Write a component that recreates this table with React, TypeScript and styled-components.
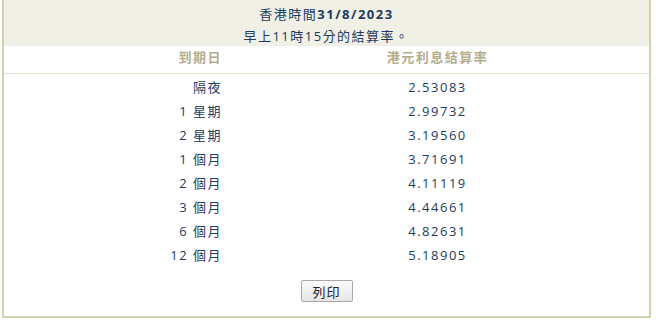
import React from "react";
import styled, { createGlobalStyle } from "styled-components";

const Global = createGlobalStyle`
  html, body { margin: 0; padding: 0; background: #fff; }
  body { font-family: "Open Sans", "Noto Sans CJK TC", sans-serif; }
`;

const Panel = styled.div`
  width: 649px;
  margin: 0 0 0 2px;
  border: 2px solid #d3d2b0;
  border-top: none;
  height: 318px;
  box-sizing: border-box;
  display: flex;
  flex-direction: column;
  color: #1d3b5c;
  font-size: 13px;
  letter-spacing: 1.5px;
`;

const Header = styled.div`
  background: #f1f0e6;
  height: 46px;
  display: flex;
  flex-direction: column;
  align-items: center;
  justify-content: center;
  box-sizing: border-box;
  padding-top: 4px;
  gap: 3px;
`;

const HeaderLine = styled.div`
  height: 19px;
  line-height: 19px;
`;

const Strong = styled.b`
  font-weight: 700;
`;

const Table = styled.div`
  display: grid;
  grid-template-columns: 222px 1fr;
`;

const HeadCell = styled.div<{ $align: "right" | "center" }>`
  text-align: ${(p) => p.$align};
  padding-right: ${(p) => (p.$align === "right" ? "4px" : "0")};
  color: #b4ad8d;
  font-weight: 700;
  height: 28px;
  line-height: 22px;
  box-sizing: border-box;
  border-bottom: 1px solid #e3e1d2;
`;

const Cell = styled.div<{ $align: "right" | "center"; $first?: boolean }>`
  text-align: ${(p) => p.$align};
  padding-right: ${(p) => (p.$align === "right" ? "4px" : "0")};
  height: 24px;
  line-height: 24px;
  margin-top: ${(p) => (p.$first ? "1px" : "0")};
`;

const Footer = styled.div`
  display: flex;
  justify-content: center;
  padding-top: 13px;
  padding-left: 0;
`;

const Button = styled.button`
  font-family: "Open Sans", "Noto Sans CJK TC", sans-serif;
  font-size: 13px;
  color: #222;
  background: linear-gradient(#fbfbfb, #e6e6e6);
  border: 1px solid #a8a8a8;
  border-radius: 2px;
  width: 52px;
  height: 22px;
  padding: 0;
  letter-spacing: 1px;
`;

const rows: [string, string][] = [
  ["隔夜", "2.53083"],
  ["1 星期", "2.99732"],
  ["2 星期", "3.19560"],
  ["1 個月", "3.71691"],
  ["2 個月", "4.11119"],
  ["3 個月", "4.44661"],
  ["6 個月", "4.82631"],
  ["12 個月", "5.18905"],
];

export default function App() {
  return (
    <>
      <Global />
      <Panel>
        <Header>
          <HeaderLine>
            香港時間<Strong>31/8/2023</Strong>
          </HeaderLine>
          <HeaderLine>早上11時15分的結算率。</HeaderLine>
        </Header>
        <Table>
          <HeadCell $align="right">到期日</HeadCell>
          <HeadCell $align="center">港元利息結算率</HeadCell>
          {rows.map(([a, b], i) => (
            <React.Fragment key={a}>
              <Cell $align="right" $first={i === 0}>{a}</Cell>
              <Cell $align="center" $first={i === 0}>{b}</Cell>
            </React.Fragment>
          ))}
        </Table>
        <Footer>
          <Button>列印</Button>
        </Footer>
      </Panel>
    </>
  );
}
